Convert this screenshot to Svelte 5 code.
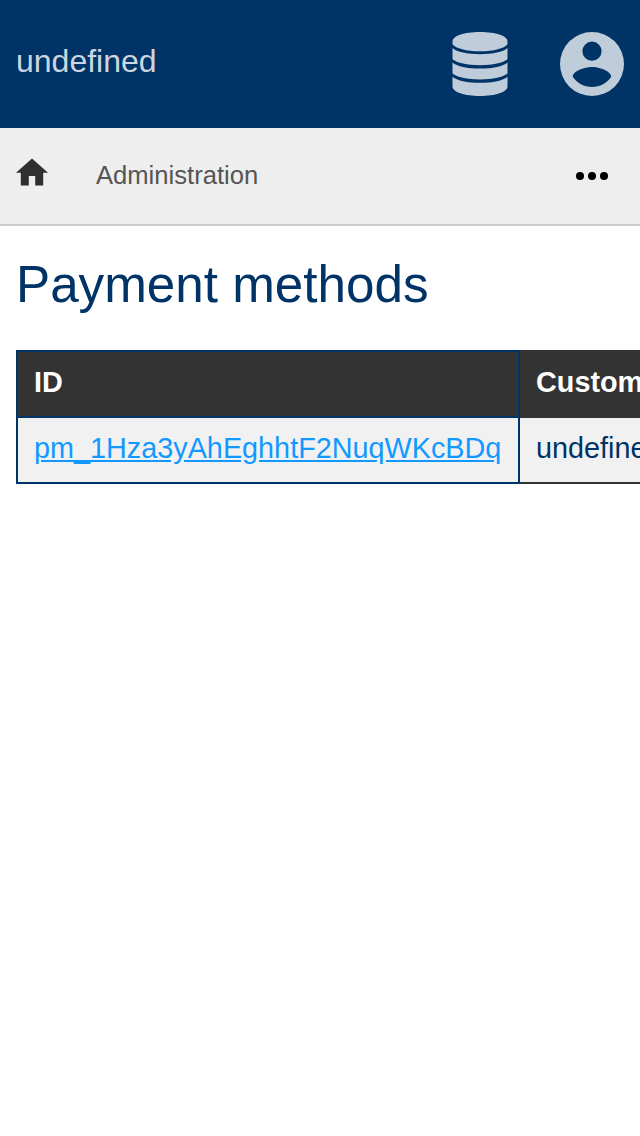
<script>
  const rows = [{ id: 'pm_1Hza3yAhEghhtF2NuqWKcBDq', customer: 'undefined' }];
</script>

<header>
  <a class="brand" href="#home">undefined</a>
  <div class="actions">
    <svg width="64" height="64" viewBox="0 0 64 64" aria-hidden="true">
      <path d="M4.500 9.500C4.500 4 16 0 32 0s27.500 4 27.500 9.500v2.700C56 16.500 46 19.200 32 19.200S8 16.500 4.500 12.200z" />
      <path d="M4.500 16C9 20 19 22.200 32 22.200S55 20 59.500 16v11.300C55 31 45 33.200 32 33.200S9 31 4.500 27.300z" />
      <path d="M4.500 30.400C9 34.300 19 36.500 32 36.500s23-2.200 27.500-6.100v11.200C55 45.300 45 47.500 32 47.500S9 45.300 4.500 41.600z" />
      <path d="M4.500 44.700C9 48.600 19 50.800 32 50.800s23-2.200 27.500-6.100v9.800C59.500 60 47 64 32 64S4.500 60 4.500 54.500z" />
    </svg>
    <svg width="64" height="64" viewBox="0 0 496 496" aria-hidden="true">
      <path fill-rule="evenodd" d="M248 0a248 248 0 1 0 0 496 248 248 0 0 0 0-496zm0 74.400a74.400 74.400 0 1 1 0 148.800 74.400 74.400 0 0 1 0-148.800zm0 352.200c-62 0-116.800-31.700-148.800-79.900.7-49.300 99.200-76.400 148.800-76.400 49.400 0 148.100 27.100 148.800 76.400-32 48.200-86.800 79.900-148.800 79.900z" />
    </svg>
  </div>
</header>
<nav>
  <svg class="home" width="32" height="28" viewBox="0 -0.4 32 28" aria-hidden="true"><path d="M12.800 27.200v-9.600h6.400v9.600h8V14.400H32L16 0 0 14.400h4.800v12.800z" /></svg>
  <a class="crumb" href="#administration">Administration</a>
  <svg class="more" width="32" height="8" viewBox="0 0 32 8" aria-hidden="true"><circle cx="4" cy="4" r="4" /><circle cx="16" cy="4" r="4" /><circle cx="28" cy="4" r="4" /></svg>
</nav>
<main>
  <h1>Payment methods</h1>
  <table>
    <thead><tr><th class="id">ID</th><th>Customer</th></tr></thead>
    <tbody>
      {#each rows as row}
        <tr><td class="id"><a href="#{row.id}">{row.id}</a></td><td>{row.customer}</td></tr>
      {/each}
    </tbody>
  </table>
</main>

<style>
  :global(body) { background: #fff; color: #036; font: 28.800px/32px "Liberation Sans", Arial, sans-serif; overflow: hidden; }
  header { display: flex; justify-content: space-between; height: 128px; padding: 0 16px; box-sizing: border-box; background: #036; }
  .brand { padding-top: 43px; height: 36px; line-height: 36px; font-size: 32px; color: #ccd6e0; text-decoration: none; }
  .actions { display: flex; gap: 48px; padding-top: 32px; fill: #bfccd9; }
  nav { display: flex; align-items: center; height: 98px; padding: 0 32px 0 16px; box-sizing: border-box; background: #eee; border-bottom: 2px solid #ccc; }
  .home { fill: #2f2f2f; margin-top: -8px; }
  .crumb { margin-left: 48px; margin-top: -3px; font-size: 25.600px; color: #555; text-decoration: none; }
  .more { margin-left: auto; }
  main { padding: 30px 16px 0; }
  h1 { margin: 0 0 36px; font-size: 51.200px; line-height: 58px; font-weight: 400; }
  table { width: 760px; table-layout: fixed; border-collapse: collapse; }
  th, td { height: 66px; padding: 0 16px 4px; box-sizing: border-box; border: 2px solid #333; text-align: left; }
  th { background: #333; color: #fff; font-weight: 700; }
  td { background: #f1f1f1; }
  .id { width: 502px; border-color: #036; }
  td a { color: #19f; }
</style>
